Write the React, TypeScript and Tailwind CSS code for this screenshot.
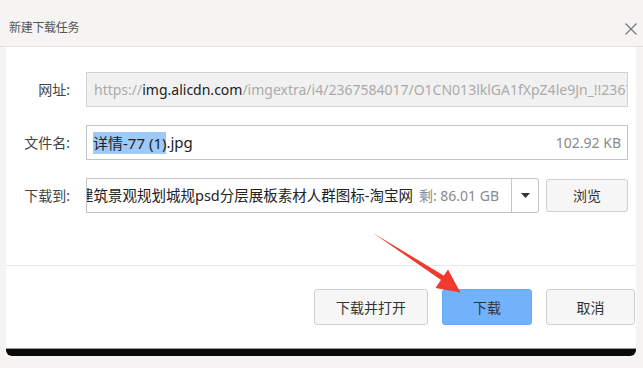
import React from "react";

const FONT = { fontFamily: '"Noto Sans", "Noto Sans CJK SC", sans-serif' };

export default function App() {
  return (
    <div
      className="relative w-[643px] h-[368px] overflow-hidden bg-[#f5f4f3] text-[#333]"
      style={FONT}
    >
      {/* Title bar */}
      <div className="flex h-[47px] items-center justify-between pl-[9px] pr-[6px] pt-[10px] border-b border-[#e2e2e2]">
        <span className="text-[12px] tracking-[-0.3px] text-[#555]">新建下载任务</span>
        <svg width="12" height="12" viewBox="0 0 12 12" className="mt-[2px]">
          <path d="M0.5 0.5 L11.5 11.5 M11.5 0.5 L0.5 11.5" stroke="#777" strokeWidth="1.2" />
        </svg>
      </div>

      {/* White panel */}
      <div className="ml-[6px] mr-[7px] h-[301px] bg-white flex flex-col">
        <div className="flex flex-col gap-[18px] pt-[25px] pr-[8px]">
          {/* Row 1 */}
          <div className="flex items-center h-[35px]">
            <div className="w-[66px] text-right text-[14px] text-[#444] pr-[2px]">网址:</div>
            <div className="ml-[14px] flex-1 h-[35px] bg-[#f1f1f1] border border-[#d2d2d2] flex items-center pl-[7px] overflow-hidden whitespace-nowrap text-[14px]">
              <span className="text-[#ababab]">https://</span>
              <span className="text-[#222]">img.alicdn.com</span>
              <span className="text-[#ababab]">/imgextra/i4/2367584017/O1CN013lklGA1fXpZ4le9Jn_!!2367584017.jpg</span>
            </div>
          </div>
          {/* Row 2 */}
          <div className="flex items-center h-[35px]">
            <div className="w-[66px] text-right text-[14px] text-[#444] pr-[2px]">文件名:</div>
            <div className="ml-[14px] flex-1 h-[35px] bg-white border border-[#c4c4c4] flex items-center pl-[6px] pr-[6px] whitespace-nowrap text-[15px]">
              <span className="bg-[#9fc9f8] text-[#222] leading-[22px]">详情-77 (1)</span>
              <span className="text-[#222]">.jpg</span>
              <span className="ml-auto text-[14px] text-[#8a8a8a]">102.92 KB</span>
            </div>
          </div>
          {/* Row 3 */}
          <div className="flex items-center h-[35px]">
            <div className="w-[66px] text-right text-[14px] text-[#444] pr-[2px]">下载到:</div>
            <div className="ml-[14px] w-[426px] h-[35px] bg-white border border-[#c4c4c4] flex items-center overflow-hidden whitespace-nowrap text-[14.5px]">
              <span className="-ml-[8px] text-[#222]">建筑景观规划城规psd分层展板素材人群图标-淘宝网</span>
              <span className="ml-[6px] text-[14px] text-[#8a8a8a]">剩: 86.01 GB</span>
            </div>
            <div className="w-[27px] h-[35px] border border-l-0 border-[#c4c4c4] rounded-r-[3px] flex items-center justify-center">
              <svg width="9" height="5" viewBox="0 0 9 5">
                <path d="M0 0 L9 0 L4.5 5 Z" fill="#333" />
              </svg>
            </div>
            <button className="ml-[7px] w-[82px] h-[33px] bg-[#f6f6f6] border border-[#cfcfcf] rounded-[3px] text-[14px] text-[#333]">
              浏览
            </button>
          </div>
        </div>

        <div className="mt-[52px] border-t border-[#e8e8e8]" />

        <div className="flex justify-end gap-[14px] pt-[23px] pr-[1px]">
          <button className="w-[114px] h-[36px] bg-[#f6f6f6] border border-[#d0d0d0] rounded-[3px] text-[14px] text-[#333]">
            下载并打开
          </button>
          <button className="w-[90px] h-[36px] bg-[#71b2fb] border border-[#65a8f5] rounded-[3px] text-[14px] text-[#333]">
            下载
          </button>
          <button className="w-[89px] h-[36px] bg-[#f6f6f6] border border-[#d0d0d0] rounded-[3px] text-[14px] text-[#333]">
            取消
          </button>
        </div>
      </div>

      {/* bottom black bar */}
      <div className="ml-[6px] w-[630px] h-[8px] bg-[#0a0a0a] border-t border-[#9a9a9a] rounded-b-[6px]" />

      {/* Red annotation arrow */}
      <svg
        className="absolute left-0 top-0 pointer-events-none"
        width="643"
        height="368"
        viewBox="0 0 643 368"
      >
        <path d="M373 233 L447 277.5 L444 282 Z" fill="#f03a2e" />
        <path d="M460.5 292.5 L435.5 288 L448 269.5 Z" fill="#f03a2e" />
      </svg>
    </div>
  );
}
